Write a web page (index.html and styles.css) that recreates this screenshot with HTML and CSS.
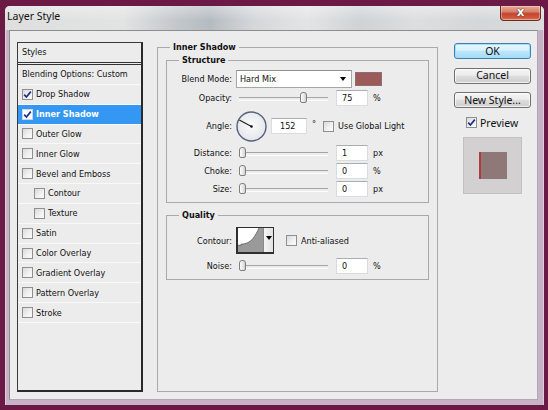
FILE: index.html
```html
<!DOCTYPE html>
<html>
<head>
<meta charset="utf-8">
<title>Layer Style</title>
<link rel="stylesheet" href="styles.css">
</head>
<body>
<div class="window">
  <div class="titlebar">
    <span class="title">Layer Style</span>
    <span class="close">x</span>
  </div>
  <div class="content">
    <div class="styles-panel">
      <div class="panel-head">Styles</div>
      <ul class="style-list">
        <li class="row">Blending Options: Custom</li>
        <li class="row"><span class="cb"><svg viewBox="0 0 11 11"><path d="M2.2 5.6 L4.4 8 L8.8 2.6"/></svg></span>Drop Shadow</li>
        <li class="row selected"><span class="cb"><svg viewBox="0 0 11 11"><path d="M2.2 5.6 L4.4 8 L8.8 2.6"/></svg></span>Inner Shadow</li>
        <li class="row"><span class="cb"></span>Outer Glow</li>
        <li class="row"><span class="cb"></span>Inner Glow</li>
        <li class="row"><span class="cb"></span>Bevel and Emboss</li>
        <li class="row sub"><span class="cb"></span>Contour</li>
        <li class="row sub"><span class="cb"></span>Texture</li>
        <li class="row"><span class="cb"></span>Satin</li>
        <li class="row"><span class="cb"></span>Color Overlay</li>
        <li class="row"><span class="cb"></span>Gradient Overlay</li>
        <li class="row"><span class="cb"></span>Pattern Overlay</li>
        <li class="row"><span class="cb"></span>Stroke</li>
      </ul>
    </div>

    <fieldset class="group outer">
      <legend>Inner Shadow</legend>
      <fieldset class="group sub structure">
        <legend>Structure</legend>
        <div class="frow blend">
          <span class="flabel">Blend Mode:</span>
          <div class="select"><span>Hard Mix</span><span class="arrow"></span></div>
          <span class="color"></span>
        </div>
        <div class="frow opacity">
          <span class="flabel">Opacity:</span>
          <div class="slider"><span class="thumb" style="left:64px"></span></div>
          <span class="input">75</span>
          <span class="unit">%</span>
        </div>
        <div class="frow angle">
          <span class="flabel">Angle:</span>
          <svg class="dial" viewBox="0 0 31 31">
            <defs>
              <radialGradient id="dg" cx="50%" cy="45%" r="55%">
                <stop offset="0" stop-color="#fbfbfb"/>
                <stop offset="1" stop-color="#e2e5ea"/>
              </radialGradient>
            </defs>
            <circle cx="15.5" cy="15.5" r="14.5" fill="url(#dg)" stroke="#56617a" stroke-width="1.4"/>
            <line x1="15.5" y1="15.5" x2="3.3" y2="9" stroke="#1a1a1a" stroke-width="1.1"/>
            <circle cx="15.5" cy="15.5" r="1.3" fill="#111"/>
          </svg>
          <span class="input wide">152</span>
          <span class="deg">°</span>
          <span class="cb"></span>
          <span class="cblabel">Use Global Light</span>
        </div>
        <div class="frow distance">
          <span class="flabel">Distance:</span>
          <div class="slider"><span class="thumb" style="left:3px"></span></div>
          <span class="input">1</span>
          <span class="unit">px</span>
        </div>
        <div class="frow choke">
          <span class="flabel">Choke:</span>
          <div class="slider"><span class="thumb" style="left:3px"></span></div>
          <span class="input">0</span>
          <span class="unit">%</span>
        </div>
        <div class="frow size">
          <span class="flabel">Size:</span>
          <div class="slider"><span class="thumb" style="left:3px"></span></div>
          <span class="input">0</span>
          <span class="unit">px</span>
        </div>
      </fieldset>

      <fieldset class="group sub quality">
        <legend>Quality</legend>
        <div class="frow contour">
          <span class="flabel">Contour:</span>
          <div class="contour-pick">
            <svg class="curve" viewBox="0 0 25 25" preserveAspectRatio="none">
              <path d="M0 25 L0 18 L3 18 L3 17 C8 16.5 12 15 15 11 C17 8 19.5 4 21 0 L25 0 L25 25 Z" fill="#9a9a9a"/>
              <path d="M0 18 L3 18 L3 17 C8 16.5 12 15 15 11 C17 8 19.5 4 21 0" fill="none" stroke="#555" stroke-width="0.8"/>
            </svg>
            <span class="drop"><span class="arrow"></span></span>
          </div>
          <span class="cb aa"></span>
          <span class="cblabel">Anti-aliased</span>
        </div>
        <div class="frow noise">
          <span class="flabel">Noise:</span>
          <div class="slider"><span class="thumb" style="left:3px"></span></div>
          <span class="input">0</span>
          <span class="unit">%</span>
        </div>
      </fieldset>
    </fieldset>

    <div class="actions">
      <button class="btn default">OK</button>
      <button class="btn">Cancel</button>
      <button class="btn">New Style...</button>
      <div class="preview-check">
        <span class="cb"><svg viewBox="0 0 11 11"><path d="M2.2 5.6 L4.4 8 L8.8 2.6"/></svg></span>
        <span>Preview</span>
      </div>
      <div class="preview"><span class="preview-sq"></span></div>
    </div>
  </div>
</div>
</body>
</html>
```

FILE: styles.css
```css
* { box-sizing: border-box; }

html, body {
  margin: 0;
  width: 548px;
  height: 410px;
  overflow: hidden;
}

body {
  background: #6b1a45;
  font-family: "DejaVu Sans Condensed", "DejaVu Sans", sans-serif;
  font-size: 9px;
  color: #111;
}

.window {
  margin: 6px 4px 0 5px;
  height: 399px;
  display: flex;
  flex-direction: column;
  background: #c7b2c7;
  border-radius: 5px 5px 0 0;
  box-shadow: inset 1px 0 0 #dccfdc, inset -1px 0 0 #dccfdc;
}

.titlebar {
  height: 24px;
  display: flex;
  align-items: flex-start;
  padding: 0 3px 0 2px;
  border-radius: 5px 5px 0 0;
  background:
    linear-gradient(180deg, rgba(255,255,255,0.35) 0%, rgba(255,255,255,0) 60%),
    linear-gradient(90deg, #dedede 0%, #e2e3e3 22%, #c2c7cb 32%, #b5bcc1 38%, #d4d7da 46%, #e3e4e5 56%, #cfd3d6 66%, #dcdee0 76%, #d4d7d9 88%, #dadcdd 100%);
}

.title {
  font-family: "Noto Sans", "Open Sans", sans-serif;
  font-size: 10.5px;
  line-height: 20px;
  color: #111;
}

.close {
  margin-left: auto;
  width: 41px;
  height: 15px;
  border: 1px solid #6a2d22;
  border-top: none;
  border-radius: 0 0 4px 4px;
  background: linear-gradient(180deg, #e9a896 0%, #d7826d 40%, #c5452c 55%, #cf5a3f 85%, #e07a5c 100%);
  color: #fff;
  font-family: "DejaVu Sans", sans-serif;
  font-weight: bold;
  font-size: 12px;
  line-height: 12px;
  text-align: center;
  text-shadow: 0 0 1px #4a1a12, 0 0 1px #4a1a12;
  box-shadow: inset 0 0 0 1px rgba(255,255,255,0.35);
}

.content {
  flex: 1;
  margin: 0 6px 5px 4px;
  background: #ececec;
  border: 1px solid #8d8d8d;
  border-right-color: #b4a6b4;
  border-bottom-color: #b4a6b4;
  display: flex;
  align-items: flex-start;
  padding: 10px 0 0 7px;
}

/* ---------- left styles list ---------- */
.styles-panel {
  margin-top: 1px;
  width: 126px;
  height: 350px;
  border: 1px solid #3a3a3a;
  border-right-width: 2px;
  border-bottom-width: 2px;
  border-right-color: #2a2a2a;
  border-bottom-color: #2a2a2a;
  background: #ececec;
  display: flex;
  flex-direction: column;
}

.panel-head {
  height: 22px;
  line-height: 18px;
  padding-left: 4px;
  border-bottom: 3px double #333;
}

.style-list {
  list-style: none;
  margin: 0;
  padding: 0;
}

.row {
  height: 19.85px;
  display: flex;
  align-items: center;
  padding-left: 4px;
  border-bottom: 1px solid #f9f9f9;
  white-space: nowrap;
}

.row.sub { padding-left: 16px; }

.row .cb { margin-right: 3px; }

.row.selected {
  background: #3597f4;
  color: #fff;
  font-weight: bold;
}

.row.selected .cb {
  background: #fff;
  border-color: #c8d6e6;
}

/* checkbox */
.cb {
  display: inline-block;
  flex: none;
  width: 11px;
  height: 11px;
  border: 1px solid #8e8f8f;
  background: linear-gradient(135deg, #d9d9d9 0%, #f2f2f2 60%, #fbfbfb 100%);
  position: relative;
}

.cb svg {
  position: absolute;
  left: -1px;
  top: -1px;
  width: 11px;
  height: 11px;
}

.cb svg path {
  fill: none;
  stroke: #1f2f8a;
  stroke-width: 1.7;
}

/* ---------- middle settings ---------- */
.group {
  margin: 0;
  min-width: 0;
  border: 1px solid #a9a9a9;
}

.group legend {
  font-weight: bold;
  line-height: 13px;
  padding: 0 3px;
}

.outer {
  margin-left: 14px;
  width: 281px;
  height: 351px;
  padding: 0 8px;
}

.outer > legend { margin-left: 4px; }

.sub > legend { margin-left: 12px; }

.structure {
  padding: 3px 0 5.5px 0;
}

.quality {
  margin-top: 6px;
  padding: 5px 0 5px 0;
}

.frow {
  display: flex;
  align-items: center;
  height: 16px;
  white-space: nowrap;
}

.flabel {
  width: 65px;
  text-align: right;
  margin-right: 4px;
  flex: none;
}

.blend { height: 18px; }
.opacity { margin-top: 1.5px; }
.angle { height: 31px; margin-top: 5px; }
.distance { margin-top: 3.5px; }
.choke { margin-top: 2px; }
.size { margin-top: 1.5px; }
.contour { height: 27px; }
.noise { margin-top: 4px; }

.select {
  width: 116px;
  height: 18px;
  background: #fff;
  border: 1px solid #a7a7a7;
  border-top-color: #8f8f8f;
  display: flex;
  align-items: center;
  padding-left: 3px;
}

.select .arrow { margin-left: auto; margin-right: 5px; }

.arrow {
  width: 0;
  height: 0;
  border-left: 3.5px solid transparent;
  border-right: 3.5px solid transparent;
  border-top: 4px solid #000;
}

.color {
  width: 27px;
  height: 14px;
  margin-left: 3px;
  background: #9c5a5a;
  border: 1px solid #8a7070;
}

.slider {
  position: relative;
  width: 92px;
  height: 16px;
  flex: none;
}

.slider::before {
  content: "";
  position: absolute;
  left: 3px;
  right: 0;
  top: 7px;
  height: 2px;
  border-top: 1px solid #a4a4a4;
  border-bottom: 1px solid #fdfdfd;
}

.thumb {
  position: absolute;
  top: 2px;
  width: 7px;
  height: 11px;
  border: 1px solid #7f7f7f;
  border-radius: 3px 3px 2px 2px;
  background: linear-gradient(90deg, #fdfdfd 0%, #e6e6e6 60%, #cfcfcf 100%);
}

.input {
  width: 32px;
  height: 16px;
  margin-left: 8px;
  background: #fff;
  border: 1px solid #d9dde2;
  border-top-color: #abadb3;
  padding-left: 5px;
  line-height: 14px;
}

.input.wide { width: 36px; margin-left: 4px; padding-left: 8px; }

.unit { margin-left: 5px; }

.dial { width: 31px; height: 31px; flex: none; }

.deg {
  margin-left: 5px;
  align-self: flex-start;
  margin-top: 9px;
  line-height: 9px;
}

.angle .cb { margin-left: 7px; }

.cblabel { margin-left: 4px; }

.contour-pick {
  width: 38px;
  height: 27px;
  display: flex;
  border: 1px solid #2f2f2f;
  border-width: 1px 1px 2px 2px;
  background: #fff;
  flex: none;
}

.curve {
  width: 25px;
  height: 24px;
  display: block;
}

.drop {
  flex: 1;
  border-left: 1px solid #8a8a8a;
  background: linear-gradient(90deg, #f4f4f4, #e2e2e2);
  display: flex;
  justify-content: center;
  padding-top: 8px;
}

.drop .arrow {
  border-left-width: 3px;
  border-right-width: 3px;
}

.cb.aa { margin-left: 12px; }

/* ---------- right column ---------- */
.actions {
  margin-left: 16px;
  width: 77px;
  display: flex;
  flex-direction: column;
  padding-top: 2px;
}

.btn {
  display: block;
  width: 77px;
  height: 16px;
  margin: 0 0 8.5px 0;
  padding: 0;
  border: 1px solid #707070;
  border-radius: 3px;
  background: linear-gradient(180deg, #f4f4f4 0%, #ececec 45%, #dddddd 50%, #cfcfcf 100%);
  font-family: "Noto Sans", "Open Sans", sans-serif;
  font-size: 10.5px;
  line-height: 13px;
  color: #111;
  box-shadow: inset 0 0 0 1px rgba(255,255,255,0.7);
}

.btn.default {
  border-color: #3c7fb1;
  background: linear-gradient(180deg, #eaf6fd 0%, #d9f0fc 45%, #bee6fd 50%, #a7d9f5 100%);
  box-shadow: inset 0 0 0 1px #9fe1fb;
}

.preview-check {
  display: flex;
  align-items: center;
  margin: 0.5px 0 0 12px;
  height: 11px;
  font-family: "Noto Sans", "Open Sans", sans-serif;
  font-size: 10.5px;
}

.preview-check .cb { margin-right: 3px; }

.preview {
  margin: 9px 0 0 9px;
  width: 59px;
  height: 57px;
  background: #d2d0d0;
  border: 1px solid #c2c0c0;
  display: flex;
  align-items: center;
  justify-content: center;
}

.preview-sq {
  width: 28px;
  height: 27px;
  background: #8e7878;
  border-left: 2px solid #b23a3e;
  margin-left: 1px;
}
```
